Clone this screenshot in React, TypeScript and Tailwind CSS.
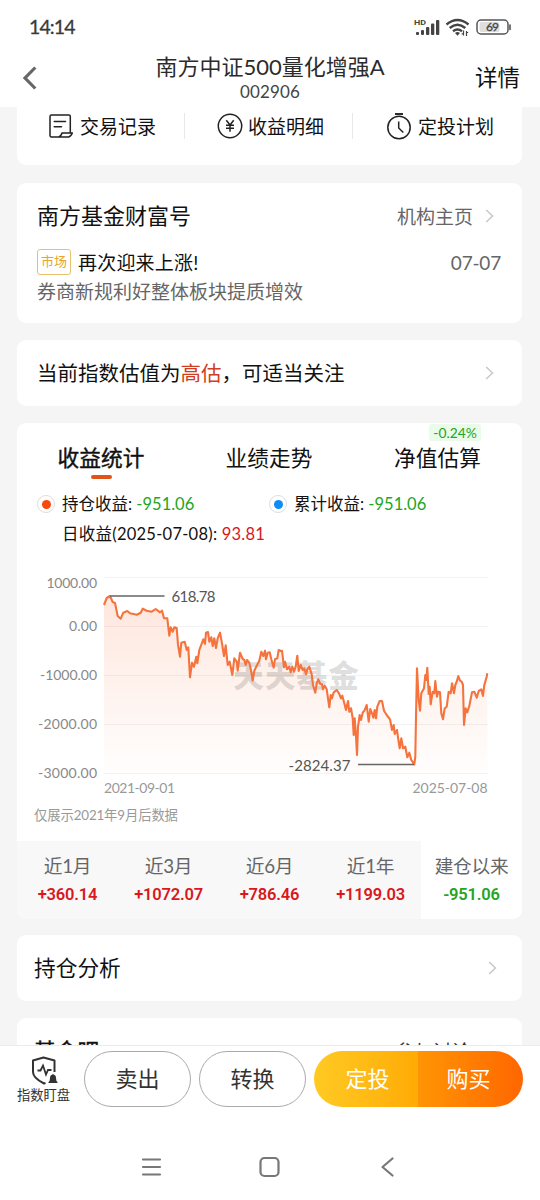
import React from "react"

const GREEN = "text-[#22a522]"
const RED = "text-[#d8181c]"

const chartPoints = `104,605 106.7,598 110,596 112.7,602 115,603 117.7,616 120.7,618.7 123.3,612.7 127.3,611 130,613.3
136.7,614.7 140.7,612.7 142.7,608.7 146.7,610.7 151.7,611.7 155.7,609 160,612.3 162,610.7 164,618.3 167.3,618.3
169.3,635.7 170.7,627.3 172.7,631.7 174.3,627.3 176.7,628 178,644.7 180,656.7 181.3,642.7 184.7,641.7 186.7,650
188.3,647.3 190,677.3 192,662.7 194,666.7 196.3,656.7 197.3,663.3 199.3,650 203.3,639.3 205,644 206,632.7 208,632
209.3,641.7 211.3,637.3 212.7,646 214.3,638.3 216,648 217.7,638.3 220,632.7 221.7,641.7 224,656 225.7,645.3
227.7,665 229.7,661.7 232.3,675 234.3,658.3 236.7,661.7 237.7,670.7 240,652.7 242.7,659 244.3,660 245.7,665
247,660 249.3,662.7 251,670 252.7,680.7 254.3,670.7 256.7,665.7 259.3,660.7 261.3,651.7 263.3,656 265,650.7
266,659.3 267.7,652.7 269.7,652.3 271.3,659.3 273.7,667.7 275,659.3 277.3,658.3 278.7,650 280.7,651 282,650.7
284,667.3 285,661.7 287,669.3 289.3,666.7 290.7,672.3 292.3,666.7 294,671.7 295.7,666.7 297.3,655.7 298.7,671
300.7,665 302.7,670 304.3,668.3 306,674.3 307.3,669.3 309.3,666.7 311.7,674.3 313,685 315.3,692.7 316.7,683.3
318.3,679.3 320.3,684 322,684.3 323,689.3 324.7,685.7 326.7,689.3 328,698.3 329.3,707.3 330.7,695 332,698.3
333.7,692.3 336.7,690 339,693.3 341,698.3 342.3,695.7 344.3,703.3 346,710 348,701 349.3,711.7 351,708.3
352.7,718.3 353.7,735 354.7,718.3 356,736 357,755 358,726.7 359.7,715 361,720 362.7,712.7 364.7,710 366.7,705
368.7,721.7 370.3,709 372,713.3 373.3,717.7 374.7,710 376,718.3 377.3,706.7 379.7,701 382,701 384,710.7
386.7,715 390,719.3 392,730 393.7,725 394.7,734 397,730 398,737.3 399.7,748.3 401.3,738.3 403,748.3
405.3,746.7 407.3,757.3 409.3,752.7 411.3,760 414.3,764.3 415.3,756.7 416,716.7 417,668.3 418.7,700 420,710.7
421.3,693.3 424,688.3 425.3,675 426.3,680 427.3,667.7 428.7,694 429.7,686.7 430.7,704.3 432.7,691.7 434.3,693.3
435.3,681 437,696.7 438.3,691.7 440,692.3 441.3,713.3 443,719.3 444.7,708.3 446.7,706.7 448.7,691.7 450.7,693.3
452,683.3 454,693.3 455.3,685 456.7,681.7 458.3,676 460,680.7 461.7,681.7 463,685 464,725 465.7,708.3
467.3,712.3 469.3,706 472,692.3 474.3,691.7 476.7,697.7 478.7,691 481.3,689.3 483,696 484.3,685 486.7,676.7
487.3,673.3`

const gridLines = [577.5, 626.5, 675.5, 724.5, 773.5]

const axisLabels = [
  { text: "1000.00", y: 587.5, width: 50.5 },
  { text: "0.00", y: 630.5, width: 28 },
  { text: "-1000.00", y: 679.5, width: 57 },
  { text: "-2000.00", y: 728.5, width: 59 },
  { text: "-3000.00", y: 777.5, width: 59 },
]

const periods = [
  { label: "近1月", value: "+360.14" },
  { label: "近3月", value: "+1072.07" },
  { label: "近6月", value: "+786.46" },
  { label: "近1年", value: "+1199.03" },
  { label: "建仓以来", value: "-951.06", active: true },
]

function Chevron() {
  return (
    <svg width="9" height="14" viewBox="0 0 9 14" fill="none" stroke="#c8c8c8" strokeWidth="1.5">
      <path d="M1.2 1 7.5 7 1.2 13" />
    </svg>
  )
}

function RecordIcon() {
  return (
    <svg width="25" height="25" viewBox="0 0 25 25" fill="none" stroke="#222" strokeWidth="1.5" strokeLinejoin="round" strokeLinecap="round">
      <path d="M21.3 18.5V2.5Q21.3 1 19.8 1H2.5Q1 1 1 2.5V21.5Q1 23 2.5 23H19.5Q22 22.5 23.3 19H13Q12 22.5 9.5 23" />
      <path d="M5.2 7.5H16.5M5.2 12.7H12.5" />
    </svg>
  )
}

function YenIcon() {
  return (
    <svg width="26" height="26" viewBox="0 0 26 26" fill="none" stroke="#222" strokeWidth="1.5">
      <circle cx="13" cy="13" r="11.7" />
      <path d="M9.3 7.2 13 12 16.7 7.2M13 12V18.8M9 12.2H17M9 15.3H17" />
    </svg>
  )
}

function TimerIcon() {
  return (
    <svg width="26" height="28" viewBox="0 0 26 28" fill="none" stroke="#222" strokeWidth="1.5">
      <circle cx="13" cy="15.5" r="11.2" />
      <path d="M9 2H17" strokeWidth="1.9" />
      <path d="M12.7 9.5V16L17.3 20.5" />
    </svg>
  )
}

function StatusBar() {
  return (
    <div className="flex h-[54px] items-center justify-between pr-[28px] pl-[29px] text-[#3a3a3a]">
      <span className="font-['Lato'] text-[19.5px] leading-none tracking-[-0.9px] [-webkit-text-stroke:0.3px_#3a3a3a]">
        14:14
      </span>
      <svg width="98" height="20" viewBox="414 17 98 20">
        <text x="414" y="24.5" fontSize="7.5" fontWeight="700" textLength="12" lengthAdjust="spacingAndGlyphs" fontFamily="Roboto" fill="#444">HD</text>
        <g fill="#444">
          <rect x="416" y="32" width="3" height="3" rx="1" />
          <rect x="421" y="30" width="3" height="5" rx="1" />
          <rect x="426" y="27" width="3.3" height="8" rx="1" />
          <rect x="431" y="23.5" width="3.3" height="11.5" rx="1" />
          <rect x="436" y="20" width="3.3" height="15" rx="1" />
        </g>
        <g fill="none" stroke="#444" strokeWidth="2.4">
          <path d="M446.5 24.5Q457.5 15.5 468.5 24.5" />
          <path d="M449.7 28Q457.5 21.5 465.3 28" />
          <path d="M453 31.3Q457.5 27.8 462 31.3" />
        </g>
        <path d="M455 33Q457.5 31 460 33L457.5 35.7Z" fill="#444" />
        <path d="M463.5 30.500V35.5M461.7 33.8H463.5M466.5 31V36M466.5 32.5H468.2" stroke="#444" strokeWidth="1.2" />
        <rect x="479.5" y="22" width="20" height="10" rx="2" fill="#dedede" />
        <rect x="477" y="20" width="31" height="14" rx="4" fill="none" stroke="#555" strokeWidth="1.5" />
        <path d="M510 25V29.5" stroke="#555" strokeWidth="1.6" strokeLinecap="round" />
        <text x="486" y="31.3" fontSize="12" textLength="13" fontFamily="Lato" fill="#444" stroke="#444" strokeWidth="0.3">69</text>
      </svg>
    </div>
  )
}

function TitleBar() {
  return (
    <div className="relative flex h-[53px] flex-col items-center">
      <svg className="absolute top-[12px] left-[22px]" width="16" height="24" viewBox="0 0 16 24" fill="none" stroke="#666" strokeWidth="3.2">
        <path d="M13.3 1.5 3 12 13.3 22.5" />
      </svg>
      <h1 className="text-[22px] leading-[25px] whitespace-nowrap text-[#2b2b2b]">
        南方中证500量化增强A
      </h1>
      <span className="mt-[4px] text-[17px] leading-[18px] tracking-[0.1px] text-[#444]">
        002906
      </span>
      <span className="absolute top-[12px] right-[20px] text-[22.5px] leading-[24px] text-[#111]">
        详情
      </span>
    </div>
  )
}

function Shortcuts() {
  return (
    <div className="flex h-[58px] items-start rounded-b-[9px] bg-white pt-[6px]">
      <div className="flex h-[26px] w-[167px] items-center gap-[6px] pl-[32px]">
        <RecordIcon />
        <span className="text-[19px] leading-none">交易记录</span>
      </div>
      <div className="flex h-[26px] w-[168px] items-center gap-[5px] border-l border-[#e8e8e8] pl-[32px]">
        <YenIcon />
        <span className="text-[19px] leading-none">收益明细</span>
      </div>
      <div className="flex h-[26px] items-center gap-[6px] border-l border-[#e8e8e8] pl-[33px]">
        <TimerIcon />
        <span className="text-[19px] leading-none">定投计划</span>
      </div>
    </div>
  )
}

function Account() {
  return (
    <div className="mt-[18px] h-[140px] rounded-[9px] bg-white pt-[20px] pr-[21px] pl-[20px]">
      <div className="flex h-[26px] items-center justify-between pr-[7px]">
        <span className="text-[22px] leading-none">南方基金财富号</span>
        <div className="flex items-center gap-[12px] text-[19px] leading-none text-[#666]">
          机构主页
          <Chevron />
        </div>
      </div>
      <div className="mt-[19px] flex h-[28px] items-center">
        <span className="flex h-[26px] w-[34px] items-center justify-center rounded-[3px] border border-[#e9c070] pb-[2px] text-[13px] leading-none text-[#e8a52c]">
          市场
        </span>
        <span className="ml-[7px] text-[19px] leading-none tracking-[0.2px]">再次迎来上涨!</span>
        <span className="ml-auto text-[19px] leading-none tracking-[-0.2px] text-[#666]">07-07</span>
      </div>
      <p className="mt-[4px] text-[19px] leading-[23px] text-[#666]">
        券商新规利好整体板块提质增效
      </p>
    </div>
  )
}

function ProfitChart() {
  return (
    <svg className="block" width="505" height="270" viewBox="17 560 505 270" fontFamily="Lato, 'Noto Sans CJK SC', sans-serif">
      <defs>
        <linearGradient id="profitFill" gradientUnits="userSpaceOnUse" x1="0" y1="596" x2="0" y2="773">
          <stop offset="0" stopColor="#f9672f" stopOpacity="0.16" />
          <stop offset="1" stopColor="#f9672f" stopOpacity="0.01" />
        </linearGradient>
      </defs>
      {gridLines.map((y) => (
        <path key={y} d={`M104 ${y}H488`} stroke="#f2f2f2" />
      ))}
      <polygon points={`104,773 ${chartPoints} 487.3,773`} fill="url(#profitFill)" />
      <text x="233" y="687" fontSize="31" fontWeight="900" textLength="126" fontFamily="'Noto Sans CJK SC', sans-serif" fill="#000" fillOpacity="0.13">
        天天基金
      </text>
      <polyline points={chartPoints} fill="none" stroke="#f5733d" strokeWidth="2.1" strokeLinejoin="round" />
      <path d="M110 596H164.5M358 764.5H414" stroke="#666" strokeWidth="1.3" />
      <text x="171.5" y="602" fontSize="15" textLength="44" fill="#555">618.78</text>
      <text x="288.5" y="770.5" fontSize="15" textLength="62" fill="#555">-2824.37</text>
      {axisLabels.map((label) => (
        <text key={label.text} x={97 - label.width} y={label.y} fontSize="14" textLength={label.width} fill="#888">
          {label.text}
        </text>
      ))}
      <text x="104" y="793" fontSize="14" textLength="71" fill="#999">2021-09-01</text>
      <text x="412.5" y="793" fontSize="14" textLength="75" fill="#999">2025-07-08</text>
      <text x="34" y="820" fontSize="13.4" textLength="144" fill="#999">仅展示2021年9月后数据</text>
    </svg>
  )
}

function Statistics() {
  return (
    <div className="mt-[17px] h-[496px] overflow-hidden rounded-[9px] bg-white">
      <div className="flex h-[61px] pt-[22px] text-[21.7px] leading-[26px]">
        <div className="flex w-[168px] flex-col items-center">
          <span className="[-webkit-text-stroke:0.4px_#111]">收益统计</span>
          <span className="mt-[4px] h-[4px] w-[21px] rounded-full bg-[#e2521b]" />
        </div>
        <div className="flex w-[168px] justify-center">业绩走势</div>
        <div className="relative flex w-[169px] justify-center">
          净值估算
          <span className="absolute -top-[21px] right-[41px] flex h-[17px] w-[52px] items-center justify-center rounded-[3px] bg-[#eafbe9] font-['Lato'] text-[13.8px] leading-none text-[#22a522]">
            -0.24%
          </span>
        </div>
      </div>
      <div className="flex h-[40px] items-center text-[16.5px] leading-none">
        <span className="ml-[20px] flex size-[18px] shrink-0 items-center justify-center rounded-full border border-[#ddd]">
          <span className="size-[9px] rounded-full bg-[#f9480c]" />
        </span>
        <span className="ml-[7px] w-[207px] shrink-0 whitespace-nowrap">
          持仓收益: <span className={GREEN}>-951.06</span>
        </span>
        <span className="flex size-[18px] shrink-0 items-center justify-center rounded-full border border-[#ddd]">
          <span className="size-[9px] rounded-full bg-[#108cf5]" />
        </span>
        <span className="ml-[7px] whitespace-nowrap">
          累计收益: <span className={GREEN}>-951.06</span>
        </span>
      </div>
      <p className="h-[36px] pl-[45px] text-[16.5px] leading-[20px] tracking-[0.25px]">
        日收益(2025-07-08): <span className={RED}>93.81</span>
      </p>
      <ProfitChart />
      <div className="mt-[11px] flex h-[78px]">
        {periods.map((p) => (
          <div
            key={p.label}
            className={`flex w-[101px] flex-col items-center pt-[13px] ${p.active ? "bg-white" : "bg-[#f8f8f8]"}`}
          >
            <span className="text-[18.7px] leading-[24px] tracking-[-0.3px] text-[#666]">{p.label}</span>
            <span
              className={`mt-[7px] font-['Roboto'] text-[16.5px] leading-[20px] font-semibold tracking-[-0.2px] ${p.active ? GREEN : RED}`}
            >
              {p.value}
            </span>
          </div>
        ))}
      </div>
    </div>
  )
}

function BottomBar() {
  return (
    <div className="h-[155px] border-t border-[#ececec] bg-white">
      <div className="flex h-[66px] items-center text-[22px] leading-none text-[#333]">
        <div className="flex w-[84px] flex-col items-center pt-[1px] pl-[3px]">
          <svg width="28" height="30" viewBox="0 0 28 30" fill="none" stroke="#333" strokeWidth="2">
            <path d="M15.500 28 14 28.500Q3 23 3 17V5.500L13.500 2.500 24.500 5.500V17" strokeLinejoin="round" />
            <path d="M7.500 15.5H10.500L13 10.500 16 19.500 18 15H21.500" strokeWidth="1.800" />
            <path d="M18.500 28V27Q20 26 20 23Q20 20 22.300 19.700L23 18.500 23.700 19.700Q26 20 26 23Q26 26 27.500 27V28Z" fill="#333" stroke="none" />
          </svg>
          <span className="mt-[2px] text-[13.3px] leading-[17px]">指数盯盘</span>
        </div>
        <button className="h-[56px] w-[107px] rounded-full border border-[#aaa]">卖出</button>
        <button className="ml-[8px] h-[56px] w-[107px] rounded-full border border-[#aaa]">转换</button>
        <div className="ml-[8px] flex h-[56px] overflow-hidden rounded-full text-white">
          <button className="w-[104px] bg-linear-to-r from-[#ffca22] to-[#ffab03] pl-[3px]">定投</button>
          <button className="w-[105px] bg-linear-to-r from-[#ff9404] to-[#ff6600] pr-[4px]">购买</button>
        </div>
      </div>
      <svg className="mt-[44px] ml-[141px]" width="256" height="22" viewBox="0 0 256 22" fill="none" stroke="#777" strokeWidth="2.2" strokeLinecap="round" strokeLinejoin="round">
        <path d="M2 3.5H19M2 11H19M2 18.5H19" />
        <rect x="119.500" y="2" width="18" height="18" rx="4" />
        <path d="M251.500 2.500 241.500 11 251.500 19.500" />
      </svg>
    </div>
  )
}

export default function App() {
  return (
    <div className="flex h-[1200px] w-[540px] flex-col overflow-hidden bg-white font-['Lato','Noto_Sans_CJK_SC',sans-serif] text-[#111]">
      <StatusBar />
      <TitleBar />
      <div className="h-[938px] overflow-hidden bg-[#f5f5f5] pr-[18px] pl-[17px]">
        <Shortcuts />
        <Account />
        <div className="mt-[17px] flex h-[66px] items-center justify-between rounded-[9px] bg-white pr-[28px] pl-[20px]">
          <span className="text-[20.5px] leading-none">
            当前指数估值为<span className="text-[#cf3d22]">高估</span>，可适当关注
          </span>
          <Chevron />
        </div>
        <Statistics />
        <div className="mt-[16px] flex h-[66px] items-center justify-between rounded-[9px] bg-white pr-[25px] pl-[17px]">
          <span className="pt-[2px] text-[21.7px] leading-none">持仓分析</span>
          <Chevron />
        </div>
        <div className="mt-[17px] flex h-[66px] items-center justify-between rounded-[9px] bg-white pr-[25px] pl-[17px]">
          <span className="pt-[2px] text-[21.7px] leading-none [-webkit-text-stroke:0.4px_#111]">基金吧</span>
          <div className="flex items-center gap-[17px] text-[19px] leading-none text-[#333]">
            参与讨论
            <Chevron />
          </div>
        </div>
      </div>
      <BottomBar />
    </div>
  )
}
